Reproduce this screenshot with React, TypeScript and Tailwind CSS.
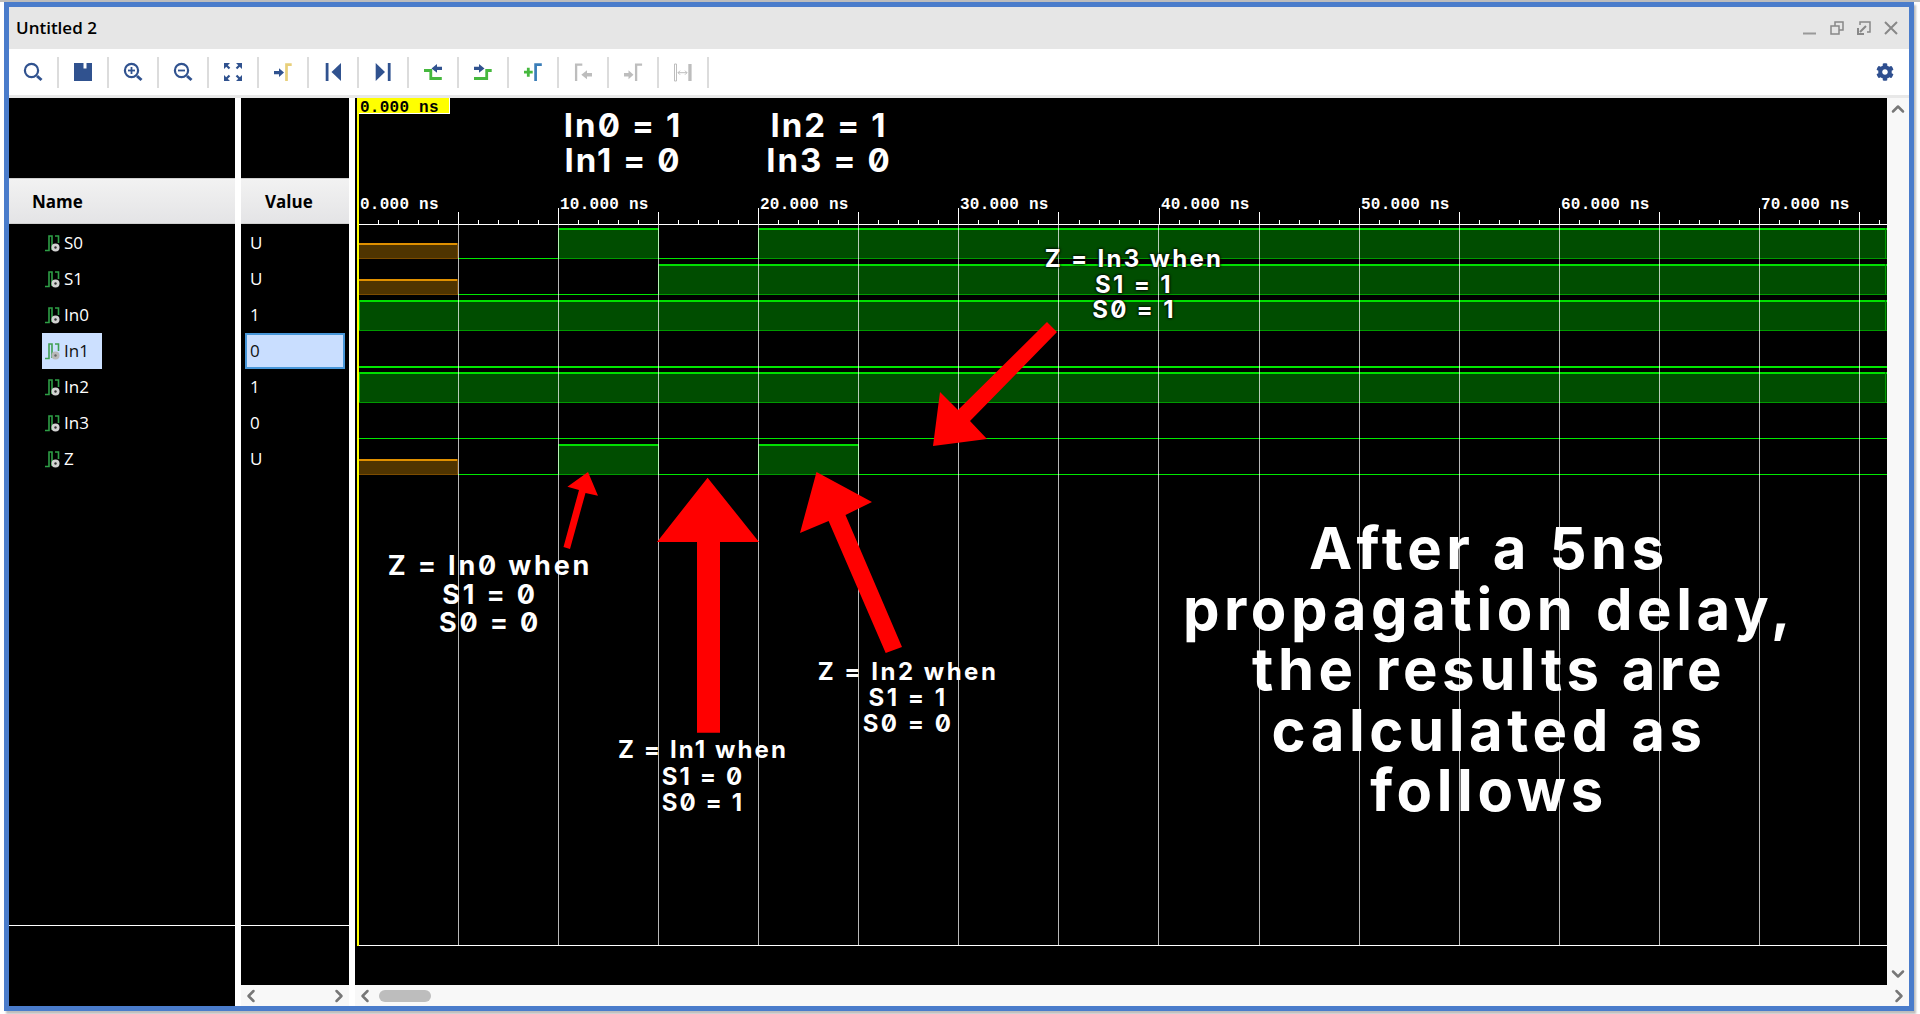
import React from "react";
import { ChevronDown, ChevronLeft, ChevronRight, ChevronUp } from "lucide-react";
import { FaCog } from "react-icons/fa";

const NAVY = "#30528f";
const GRAY = "#bdbdbd";

const signals = [
  { name: "S0", value: "U", segs: [["U", 359, 458], ["0", 458, 558], ["1", 558, 658], ["0", 658, 758], ["1", 758, 1887]] },
  { name: "S1", value: "U", segs: [["U", 359, 458], ["0", 458, 658], ["1", 658, 1887]] },
  { name: "In0", value: "1", segs: [["1", 359, 1887]] },
  { name: "In1", value: "0", segs: [["0", 359, 1887]], selected: true, thick: true },
  { name: "In2", value: "1", segs: [["1", 359, 1887]] },
  { name: "In3", value: "0", segs: [["0", 359, 1887]] },
  { name: "Z", value: "U", segs: [["U", 359, 458], ["0", 458, 558], ["1", 558, 658], ["0", 658, 758], ["1", 758, 858], ["0", 858, 1887]] },
] as { name: string; value: string; segs: [string, number, number][]; selected?: boolean; thick?: boolean }[];

const Mag = ({ sign }: { sign?: "plus" | "minus" }) => (
  <>
    <circle cx="14.5" cy="14.5" r="6.6" fill="none" stroke={NAVY} strokeWidth="2.2" />
    <path d="M20 20l4.5 4" stroke={NAVY} strokeWidth="3" />
    {sign && <path d="M11 14.5h7" stroke={NAVY} strokeWidth="1.8" />}
    {sign === "plus" && <path d="M14.5 11v7" stroke={NAVY} strokeWidth="1.8" />}
  </>
);

const toolIcons: React.ReactNode[] = [
  <Mag />,
  <path fillRule="evenodd" d="M7 7h18v18H7zM16.5 7v5.5h3V7z" fill={NAVY} />,
  <Mag sign="plus" />,
  <Mag sign="minus" />,
  <g fill={NAVY} stroke={NAVY}>
    <path d="M7 7h6l-6 6zM25 7h-6l6 6zM7 25h6l-6-6zM25 25h-6l6-6z" strokeWidth="0" />
    <path d="M9 9l3.5 3.5M23 9l-3.5 3.5M9 23l3.5-3.5M23 23l-3.5-3.5" strokeWidth="2.2" />
  </g>,
  <>
    <path d="M7 15h5v-2.8l5 4.4-5 4.4V18.2H7z" fill={NAVY} />
    <path d="M19.5 25V8.6h5.2" fill="none" stroke="#e8cf7a" strokeWidth="2.7" />
  </>,
  <>
    <path d="M8.7 7h2.8v18H8.700z" fill={NAVY} />
    <path d="M24 7v18L14.500 16z" fill={NAVY} />
  </>,
  <>
    <path d="M20.800 7h2.800v18h-2.800z" fill={NAVY} />
    <path d="M8.700 7v18L18 16z" fill={NAVY} />
  </>,
  <>
    <path d="M7 14.500h6.800v8h11" fill="none" stroke="#46b83e" strokeWidth="2.800" />
    <path d="M25 10.700h-5V8l-5.500 4.400 5.500 4.400v-2.700h5z" fill={NAVY} />
  </>,
  <>
    <path d="M7 22.500h12.700v-8h5" fill="none" stroke="#46b83e" strokeWidth="2.800" />
    <path d="M7 10.700h5V8l5.500 4.400L12 16.800v-2.700H7z" fill={NAVY} />
  </>,
  <>
    <path d="M7 16.200h8.700M11.300 11.700v9" stroke="#46b83e" strokeWidth="2.800" />
    <path d="M18.600 25V8.600h6.200" fill="none" stroke="#3a7db8" strokeWidth="2.700" />
  </>,
  <>
    <path d="M9.100 25V8.600h6.200" fill="none" stroke={GRAY} strokeWidth="2.300" />
    <path d="M25 17h-5v-2.800L14.300 18.700l5.700 4.500v-2.800h5z" fill={GRAY} />
  </>,
  <>
    <path d="M19.100 25V8.600h6" fill="none" stroke={GRAY} strokeWidth="2.300" />
    <path d="M7 17h4.500v-2.800l5 4.500-5 4.500v-2.800H7z" fill={GRAY} />
  </>,
  <>
    <path d="M7.500 8h2v17h-2z" fill="none" stroke={GRAY} strokeWidth="1" />
    <path d="M21.300 8h3.300v17h-3.300z" fill={GRAY} />
    <path d="M11 16.700h9M13 14.700l-2 2 2 2M18 14.700l2 2-2 2" fill="none" stroke={GRAY} strokeWidth="1" />
  </>,
];

const SignalIcon = ({ selected }: { selected?: boolean }) => (
  <svg width="16" height="17" viewBox="0 0 16 17" className="shrink-0">
    <path d="M0 15.500h4V1h3v14M10 1h3.500v7" fill="none" stroke={selected ? "#3f9f52" : "#2e9e46"} strokeWidth="1.600" />
    <circle cx="10.500" cy="12.500" r="4" fill={selected ? "#b9b9b9" : "#d2d2d2"} />
    <circle cx="10.500" cy="12.500" r="1.200" fill={selected ? "#666" : "#333"} />
  </svg>
);

const Waves = () => {
  const grid = Array.from({ length: 15 }, (_, i) => Math.round(458 + 100.07 * i));
  const ticks = Array.from({ length: 77 }, (_, i) => Math.round(358 + 20.014 * i));
  const labels = Array.from({ length: 8 }, (_, i) => Math.round(358 + 200.14 * i));
  return (
    <svg width="1532" height="887" viewBox="355 98 1532 887" className="block" shapeRendering="crispEdges">
      <rect x="357" y="98" width="2" height="848" fill="#ffff00" />
      <rect x="359" y="98" width="90" height="15" fill="#ffff00" />
      <rect x="359" y="113" width="91" height="1" fill="#fff" />
      <rect x="449" y="98" width="1" height="15" fill="#fff" />
      <text x="360" y="112" className="font-['Liberation_Mono',monospace] text-[16px] font-bold tracking-[0.25px]" fill="#000">0.000 ns</text>

      {labels.map((x, i) => (
        <text key={x} x={i === 0 ? 360 : x + 2} y="209" className="font-['Liberation_Mono',monospace] text-[16px] font-bold tracking-[0.25px]" fill="#fff" shapeRendering="auto">
          {`${i * 10}.000 ns`}
        </text>
      ))}
      {ticks.map((x, i) => {
        const top = i % 10 === 0 ? 208 : i % 5 === 0 ? 212 : 220;
        return i === 0 ? null : <rect key={x} x={x} y={top} width="1" height={224 - top} fill="#fff" />;
      })}
      <rect x="359" y="224" width="1528" height="1" fill="#fff" />

      {signals.map((s, row) => {
        const low = 258 + row * 36;
        const high = low - 30;
        return s.segs.map(([state, x0, x1]) => {
          if (state === "U") {
            return (
              <g key={x0}>
                <rect x={x0} y={low - 15} width={x1 - x0} height="15" fill="#4f3400" />
                <rect x={x0} y={low - 15} width={x1 - x0} height="2" fill="#e09000" />
                <rect x={x0} y={low} width={x1 - x0} height="1" fill="#7c4c00" />
                <rect x={x1 - 1} y={low - 15} width="1" height="16" fill="#7c4c00" />
              </g>
            );
          }
          if (state === "1") {
            return (
              <g key={x0}>
                <rect x={x0} y={high} width={x1 - x0} height={low - high} fill="#004d00" />
                <rect x={x0} y={high} width={x1 - x0} height="2" fill="#00e000" />
                <rect x={x0} y={low} width={x1 - x0} height="1" fill="#009a00" />
                <rect x={x0} y={high} width="1" height={low - high} fill="#00d800" />
                <rect x={x1 === 1887 ? 1885 : x1} y={high} width="1" height={low - high} fill={x1 === 1887 ? "#009a00" : "#00d800"} />
              </g>
            );
          }
          return <rect key={x0} x={x0} y={low} width={x1 - x0} height={s.thick ? 2 : 1} fill="#00e800" />;
        });
      })}

      {grid.map((x) => (
        <rect key={x} x={x} y="225" width="1" height="720" fill="#ffffff" fillOpacity="0.72" />
      ))}
      <rect x="359" y="945" width="1528" height="1" fill="#fff" />

      <g fill="#ff0000" shapeRendering="auto">
        <path d="M707.600 477.700L759 542H720V732.700H697V542H657z" />
        <path d="M588 472L598 495.700L585.500 493L570 549L563.500 547L579 490L567.400 486.700z" />
        <path d="M816.500 472L872 502L845.500 515L902 647L885.700 653L828.600 521L800 533z" />
        <path d="M933 446L940 392L958 410L1047 322L1057 332L970 421L987 439z" />
      </g>
    </svg>
  );
};

const Note = ({ lines, className }: { lines: string[]; className: string }) => (
  <div className={`absolute text-center font-['Inter',sans-serif] font-bold slashed-zero text-white whitespace-nowrap ${className}`}>
    {lines.map((l) => (
      <div key={l}>{l}</div>
    ))}
  </div>
);

const ScrollRow = ({ children }: { children: React.ReactNode }) => (
  <div className="h-[21px] bg-[#f8f8f8] flex items-center justify-between text-[#777]">{children}</div>
);

export default function App() {
  return (
    <div className="w-[1920px] h-[1014px] bg-white overflow-hidden pt-[2px] pl-[4px] pr-[6px] pb-[3px] shadow-[inset_0_2px_0_#bdbdbd] font-['Open_Sans',sans-serif]">
      <div className="h-full border-[5px] border-[#4a7ccb] flex flex-col bg-white shadow-[2px_3px_2px_#bdbdbd]">
        <div className="h-[42px] bg-[#e6e6e6] flex items-center justify-between pl-[7px] pr-[11px]">
          <span className="text-[17px] font-semibold text-black">Untitled 2</span>
          <div className="flex items-center gap-[13px]">
            <svg width="14" height="14" viewBox="0 0 14 14"><path d="M0 12.500h13" stroke="#999" strokeWidth="2" /></svg>
            <svg width="14" height="14" viewBox="0 0 14 14" fill="none" stroke="#888" strokeWidth="1.500">
              <path d="M1 5h8v8H1zM5 5V1h8v8H9" />
            </svg>
            <svg width="14" height="14" viewBox="0 0 14 14" fill="none" stroke="#888" strokeWidth="2">
              <path d="M3 4V1h10v10h-3" strokeWidth="1.500" />
              <path d="M9 5l-6 6M1 7v6h6" />
            </svg>
            <svg width="14" height="14" viewBox="0 0 14 14" fill="none" stroke="#888" strokeWidth="2">
              <path d="M1 1l12 12M13 1L1 13" />
            </svg>
          </div>
        </div>

        <div className="h-[46px] flex items-center justify-between pr-[15px]">
          <div className="flex items-center">
            {toolIcons.map((icon, i) => (
              <div key={i} className="w-[50px] h-[31px] border-r-2 border-[#dcdcdc] flex items-center justify-center">
                <svg width="32" height="32" viewBox="0 0 32 32">{icon}</svg>
              </div>
            ))}
          </div>
          <FaCog className="text-[18px] text-[#2f4f8f]" />
        </div>
        <div className="h-[3px] bg-[#e8e8e8]" />

        <div className="flex-1 flex min-h-0">
          <div className="w-[226px] bg-black flex flex-col">
            <div className="h-[80px]" />
            <div className="h-[46px] pt-[2px] bg-gradient-to-b from-[#f2f2f2] to-[#e4e4e6] border-y border-[#d0d0d0] flex items-center pl-[23px] text-[17px] font-bold text-black">Name</div>
            <div className="pt-px flex-1">
              {signals.map((s) => (
                <div key={s.name} className="h-[36px] pl-[33px] flex">
                  <div className={`w-[60px] h-[36px] pl-[3px] flex items-center gap-[3px] text-[17px] ${s.selected ? "bg-[#cce0ff] text-[#111]" : "text-white"}`}>
                    <SignalIcon selected={s.selected} />
                    <span>{s.name}</span>
                  </div>
                </div>
              ))}
            </div>
            <div className="h-[81px] border-t border-white" />
          </div>
          <div className="w-[6px]" />

          <div className="w-[108px] flex flex-col">
            <div className="h-[80px] bg-black" />
            <div className="h-[46px] pt-[2px] bg-gradient-to-b from-[#f2f2f2] to-[#e4e4e6] border-y border-[#d0d0d0] flex items-center pl-[24px] text-[17px] font-bold text-black">Value</div>
            <div className="pt-px flex-1 bg-black">
              {signals.map((s) => (
                <div key={s.name} className="h-[36px] pl-[4px]">
                  <div className={`w-[100px] h-[36px] pl-[3px] flex items-center text-[17px] ${s.selected ? "bg-[#c9deff] border-2 border-[#4796d8] text-[#111]" : "text-white border-2 border-transparent"}`}>
                    {s.value}
                  </div>
                </div>
              ))}
            </div>
            <div className="h-[60px] bg-black border-t border-white" />
            <ScrollRow>
              <ChevronLeft size={20} strokeWidth={3} />
              <ChevronRight size={20} strokeWidth={3} />
            </ScrollRow>
          </div>
          <div className="w-[6px]" />

          <div className="flex-1 flex flex-col">
            <div className="flex flex-1 min-h-0">
              <div className="relative w-[1532px] bg-black">
                <Waves />
                <Note lines={["In0 = 1", "In1 = 0"]} className="left-[208px] top-[10px] w-[120px] text-[33px] leading-[35px] tracking-[2px]" />
                <Note lines={["In2 = 1", "In3 = 0"]} className="left-[404px] top-[10px] w-[140px] text-[33px] leading-[35px] tracking-[2px]" />
                <Note lines={["Z = In3 when", "S1 = 1", "S0 = 1"]} className="left-[669px] top-[148px] w-[220px] text-[24px] leading-[25.500px] tracking-[2.300px] [text-shadow:0_0_3px_#000,0_0_3px_#000]" />
                <Note lines={["Z = In0 when", "S1 = 0", "S0 = 0"]} className="left-[15px] top-[454px] w-[240px] text-[27px] leading-[28.500px] tracking-[2.800px]" />
                <Note lines={["Z = In1 when", "S1 = 0", "S0 = 1"]} className="left-[238px] top-[639px] w-[220px] text-[24px] leading-[26.500px] tracking-[2.100px]" />
                <Note lines={["Z = In2 when", "S1 = 1", "S0 = 0"]} className="left-[443px] top-[561px] w-[220px] text-[24px] leading-[26px] tracking-[2.500px]" />
                <Note lines={["After a 5ns", "propagation delay,", "the results are", "calculated as", "follows"]} className="left-[814px] top-[420px] w-[640px] text-[58px] leading-[60.500px] tracking-[4.600px]" />
              </div>
              <div className="flex-1 bg-[#f8f8f8] flex flex-col items-center justify-between py-[1px] text-[#777]">
                <ChevronUp size={20} strokeWidth={3} />
                <ChevronDown size={20} strokeWidth={3} />
              </div>
            </div>
            <ScrollRow>
              <div className="flex items-center gap-[4px]">
                <ChevronLeft size={20} strokeWidth={3} />
                <div className="w-[52px] h-[12px] rounded-full bg-[#bdbdbd]" />
              </div>
              <ChevronRight size={20} strokeWidth={3} />
            </ScrollRow>
          </div>
        </div>
      </div>
    </div>
  );
}
